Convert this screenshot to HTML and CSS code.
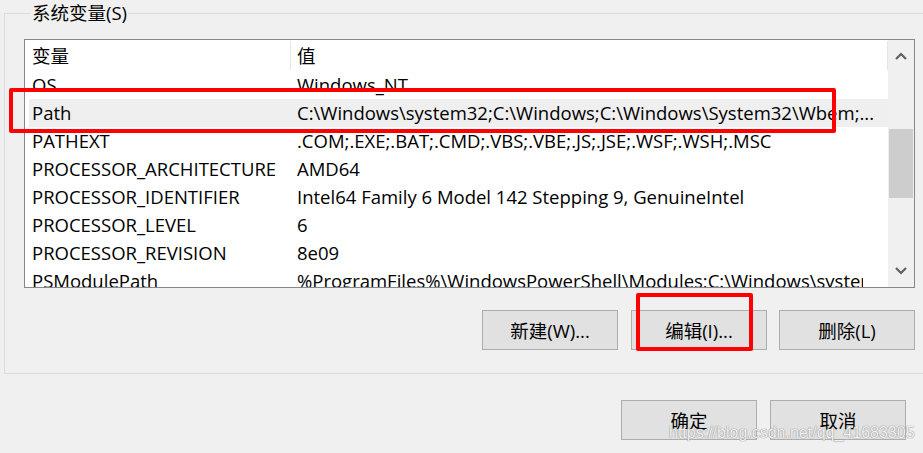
FILE: index.html
```html
<!DOCTYPE html>
<html lang="zh-CN">
<head>
<meta charset="utf-8">
<title>系统变量</title>
<link rel="stylesheet" href="styles.css">
</head>
<body>
<div class="page">
  <fieldset class="group">
    <legend class="group-title">系统变量(S)</legend>
    <div class="listbox">
      <div class="table">
        <div class="row head">
          <div class="c1">变量</div>
          <div class="c2">值</div>
        </div>
        <div class="rows">
          <div class="row"><div class="c1">OS</div><div class="c2">Windows_NT</div></div>
          <div class="row selected"><div class="c1">Path</div><div class="c2">C:\Windows\system32;C:\Windows;C:\Windows\System32\Wbem;...</div></div>
          <div class="row"><div class="c1">PATHEXT</div><div class="c2">.COM;.EXE;.BAT;.CMD;.VBS;.VBE;.JS;.JSE;.WSF;.WSH;.MSC</div></div>
          <div class="row"><div class="c1">PROCESSOR_ARCHITECTURE</div><div class="c2">AMD64</div></div>
          <div class="row"><div class="c1">PROCESSOR_IDENTIFIER</div><div class="c2">Intel64 Family 6 Model 142 Stepping 9, GenuineIntel</div></div>
          <div class="row"><div class="c1">PROCESSOR_LEVEL</div><div class="c2">6</div></div>
          <div class="row"><div class="c1">PROCESSOR_REVISION</div><div class="c2">8e09</div></div>
          <div class="row"><div class="c1">PSModulePath</div><div class="c2 clip">%ProgramFiles%\WindowsPowerShell\Modules;C:\Windows\system32\WindowsPowerShell\v1.0\Modules</div></div>
        </div>
      </div>
      <div class="scrollbar">
        <div class="sb-btn">
          <svg width="12" height="8" viewBox="0 0 12 8"><path d="M1 7 L6 2 L11 7" fill="none" stroke="#606060" stroke-width="2.2"/></svg>
        </div>
        <div class="sb-track"><div class="sb-thumb"></div></div>
        <div class="sb-btn">
          <svg width="12" height="8" viewBox="0 0 12 8"><path d="M1 1 L6 6 L11 1" fill="none" stroke="#606060" stroke-width="2.2"/></svg>
        </div>
      </div>
    </div>
    <div class="btn-row">
      <button class="btn">新建(W)...</button>
      <button class="btn">编辑(I)...</button>
      <button class="btn">删除(L)</button>
    </div>
  </fieldset>
  <div class="dialog-buttons">
    <button class="btn">确定</button>
    <button class="btn">取消</button>
  </div>
  <div class="mark mark-path"></div>
  <div class="mark mark-edit"></div>
  <div class="watermark">https://blog.csdn.net/qq_41683305</div>
</div>
</body>
</html>
```
FILE: styles.css
```css
html, body {
  margin: 0;
  padding: 0;
  background: #f0f0f0;
  overflow: hidden;
}
.page {
  position: relative;
  width: 923px;
  height: 453px;
  padding-top: 1px;
  box-sizing: border-box;
  font-family: "Open Sans", "Noto Sans CJK SC", sans-serif;
  font-size: 18.5px;
  color: #000;
}
.group {
  margin: 0 0 0 4px;
  padding: 0 0 23px 19px;
  width: 940px;
  border: 1px solid #dcdcdc;
  box-sizing: border-box;
}
.group-title {
  padding: 0 1px;
  margin-left: 7px;
  line-height: 24px;
  font-family: "Open Sans", "Noto Sans CJK SC", sans-serif;
}
.listbox {
  margin-top: 14px;
  width: 891px;
  height: 249px;
  border: 1px solid #828790;
  box-sizing: border-box;
  background: #fff;
  display: flex;
}
.table {
  flex: 1;
  overflow: hidden;
  display: flex;
  flex-direction: column;
}
.row {
  display: flex;
  height: 28px;
  line-height: 28px;
  white-space: nowrap;
  margin-left: 4px;
}
.row .c1 {
  width: 262px;
  flex: none;
  padding-left: 3px;
  box-sizing: border-box;
}
.row .c2 {
  flex: 1;
  padding-left: 6px;
  overflow: hidden;
}
.row .c2.clip {
  margin-right: 25px;
}
.row.head {
  height: 31px;
  line-height: 31px;
}
.row.head .c1 {
  border-right: 1px solid #e5e5e5;
  margin: 1px 0;
  line-height: 29px;
}
.row.head .c2 {
  border-right: 1px solid #e5e5e5;
  margin: 1px 0;
  line-height: 29px;
  padding-left: 6px;
}
.row.selected {
  background: #efefef;
}
.rows {
  flex: 1;
  overflow: hidden;
}
.scrollbar {
  width: 26px;
  flex: none;
  background: #f0f0f0;
  display: flex;
  flex-direction: column;
}
.sb-btn {
  height: 32px;
  display: flex;
  align-items: center;
  justify-content: center;
  flex: none;
}
.sb-track {
  flex: 1;
}
.sb-thumb {
  margin: 57px 1px 0 1px;
  height: 69px;
  background: #cdcdcd;
}
.btn-row {
  width: 891px;
  margin-top: 22px;
  display: flex;
  justify-content: flex-end;
  gap: 12px;
}
.btn {
  width: 136px;
  height: 40px;
  background: #e1e1e1;
  border: 1px solid #adadad;
  font-family: "Open Sans", "Noto Sans CJK SC", sans-serif;
  font-size: 18.5px;
  color: #000;
  padding: 0;
  margin: 0;
}
.btn-row .btn:first-child {
  margin-right: 1px;
}
.dialog-buttons {
  margin-top: 26px;
  width: 906px;
  display: flex;
  justify-content: flex-end;
  gap: 13px;
}
.mark {
  position: absolute;
  border: 4px solid #f00;
  border-radius: 2px;
  box-sizing: border-box;
}
.mark-path {
  left: 9px;
  top: 88px;
  width: 827px;
  height: 45px;
}
.mark-edit {
  left: 636px;
  top: 293px;
  width: 117px;
  height: 58px;
}
.watermark {
  position: absolute;
  left: 669px;
  top: 421px;
  font-family: "Liberation Sans", Arial, sans-serif;
  font-size: 16px;
  line-height: 24px;
  color: rgba(255, 255, 255, 0.9);
  text-shadow: 0 0 1px #8a8a8a, 0 0 1px #8a8a8a;
  white-space: nowrap;
}
```
